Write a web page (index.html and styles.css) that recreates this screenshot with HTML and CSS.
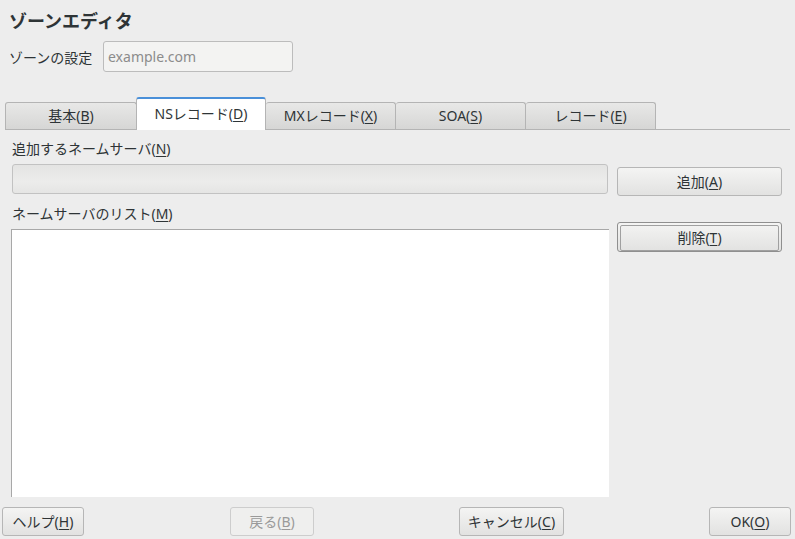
FILE: index.html
```html
<!DOCTYPE html>
<html lang="ja">
<head>
<meta charset="utf-8">
<link rel="stylesheet" href="styles.css">
</head>
<body>
<div class="win">
  <h1 class="title">ゾーンエディタ</h1>
  <div class="zone-row">
    <span class="zone-label">ゾーンの設定</span>
    <div class="zone-input">example.com</div>
  </div>
  <div class="tabs">
    <div class="tab">基本(<u>B</u>)</div>
    <div class="tab active">NSレコード(<u>D</u>)</div>
    <div class="tab">MXレコード(<u>X</u>)</div>
    <div class="tab">SOA(<u>S</u>)</div>
    <div class="tab">レコード(<u>E</u>)</div>
  </div>
  <div class="panel">
    <div class="left">
      <div class="lbl lbl1">追加するネームサーバ(<u>N</u>)</div>
      <div class="ns-input"></div>
      <div class="lbl lbl2">ネームサーバのリスト(<u>M</u>)</div>
      <div class="list"></div>
    </div>
    <div class="right">
      <div class="btn add">追加(<u>A</u>)</div>
      <div class="btn del"><span class="del-inner">削除(<u>T</u>)</span></div>
    </div>
  </div>
  <div class="footer">
    <div class="btn fb help">ヘルプ(<u>H</u>)</div>
    <div class="btn fb back disabled">戻る(<u>B</u>)</div>
    <div class="btn fb cancel">キャンセル(<u>C</u>)</div>
    <div class="btn fb ok">OK(<u>O</u>)</div>
  </div>
</div>
</body>
</html>
```
FILE: styles.css
```css
html, body {
  margin: 0;
  padding: 0;
  background: #ededed;
}
body {
  font-family: "Noto Sans", "Noto Sans CJK JP", sans-serif;
  font-size: 14px;
  color: #2e3436;
}
.win {
  width: 795px;
  height: 539px;
  display: flex;
  flex-direction: column;
  overflow: hidden;
}
u { text-decoration: underline; text-underline-offset: 2px; }
.title {
  margin: 9px 0 0 9px;
  font-size: 18px;
  font-weight: bold;
  line-height: 24px;
  color: #2e3436;
}
.zone-row {
  display: flex;
  align-items: center;
  margin: 8px 0 0 9px;
  height: 31px;
}
.zone-label {
  width: 94px;
}
.zone-input {
  height: 29px;
  width: 184px;
  border: 1px solid #bcbcbc;
  border-radius: 3px;
  background: #f3f3f2;
  color: #8c8c8c;
  line-height: 29px;
  padding-left: 4px;
}
.tabs {
  display: flex;
  align-items: flex-end;
  margin: 25px 5px 0 5px;
  height: 32px;
  border-bottom: 1px solid #b4b4b4;
}
.tab {
  width: 130px;
  height: 27px;
  box-sizing: border-box;
  border: 1px solid #b4b4b4;
  border-bottom: none;
  border-left: none;
  border-radius: 3px 3px 0 0;
  background: linear-gradient(#e8e8e7, #d6d6d5);
  text-align: center;
  line-height: 26px;
  color: #2e3436;
}
.tab:first-child {
  border-left: 1px solid #b4b4b4;
  width: 132px;
}
.tab.active {
  width: 130px;
  height: 33px;
  background: #ffffff;
  border: 1px solid #b4b4b4;
  border-top: 2px solid #4a90d9;
  border-bottom: none;
  line-height: 30px;
  margin-bottom: -1px;
  margin-left: -1px;
}
.panel {
  display: flex;
  gap: 8px;
  margin: 0 0 0 11px;
  flex: 1;
  min-height: 0;
}
.left {
  width: 598px;
  display: flex;
  flex-direction: column;
}
.lbl {
  height: 20px;
  line-height: 20px;
  padding-left: 1px;
}
.lbl1 { margin-top: 9px; }
.lbl2 { margin-top: 10px; }
.ns-input {
  margin-top: 5px;
  margin-left: 1px;
  height: 30px;
  box-sizing: border-box;
  width: 596px;
  border: 1px solid #c2c2c2;
  border-radius: 3px;
  background: linear-gradient(#e4e4e3, #ececeb 60%, #e5e5e4);
}
.list {
  margin-top: 5px;
  flex: 1;
  background: #ffffff;
  border-top: 1px solid #a8a8a8;
  border-left: 1px solid #a8a8a8;
}
.right {
  width: 165px;
  display: flex;
  flex-direction: column;
}
.btn {
  box-sizing: border-box;
  border: 1px solid #b6b6b6;
  border-radius: 3px;
  background: linear-gradient(#f4f4f3, #e2e2e1);
  text-align: center;
  color: #2e3436;
}
.add {
  margin-top: 37px;
  height: 29px;
  line-height: 27px;
}
.del {
  margin-top: 26px;
  height: 30px;
  padding: 2px;
  border-color: #8f8f8f;
}
.del-inner {
  display: block;
  height: 24px;
  line-height: 23px;
  border: 1px solid #a0a0a0;
  border-radius: 2px;
}
.footer {
  position: relative;
  height: 42px;
  flex: none;
}
.fb {
  position: absolute;
  top: 10px;
  height: 29px;
  line-height: 27px;
}
.help { left: 2px; width: 82px; }
.back { left: 230px; width: 84px; }
.cancel { left: 459px; width: 105px; }
.ok { left: 709px; width: 82px; }
.disabled {
  background: #efefee;
  border-color: #cdcdcd;
  color: #9a9a9a;
}
```
